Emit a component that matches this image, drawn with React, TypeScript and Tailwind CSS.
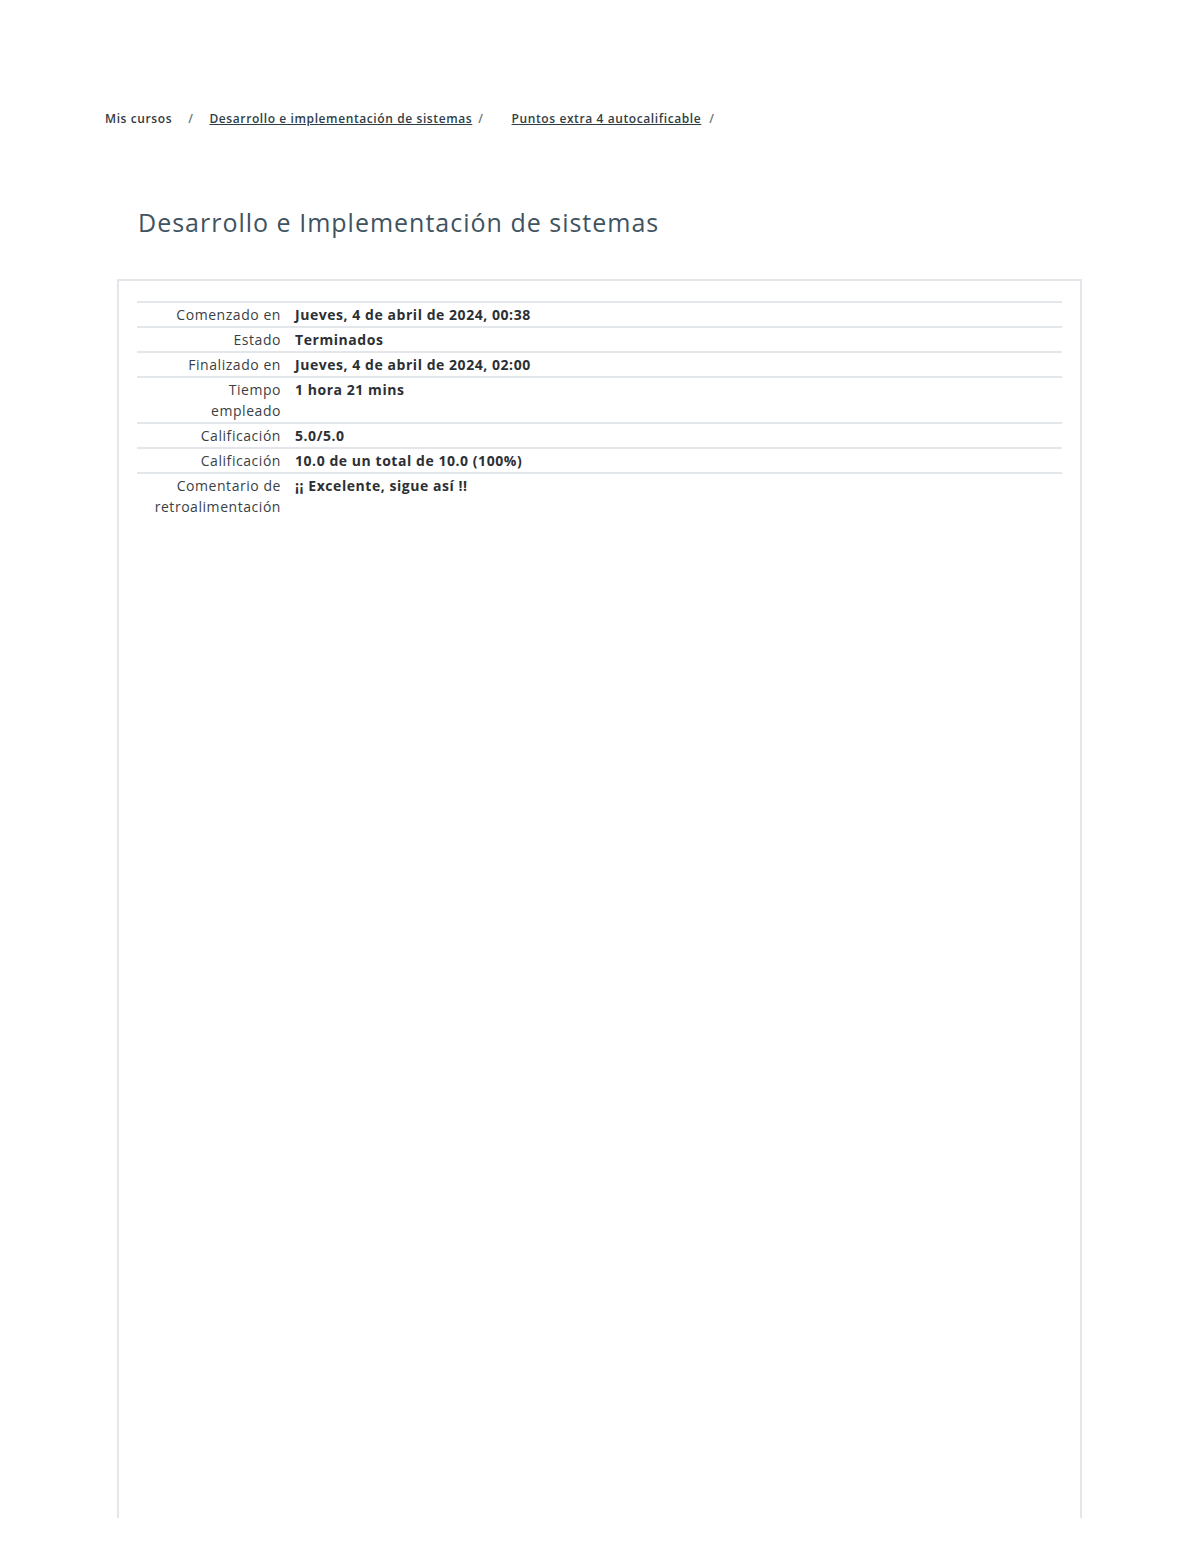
const ROWS: { label: string[]; value: string }[] = [
  { label: ["Comenzado en"], value: "Jueves, 4 de abril de 2024, 00:38" },
  { label: ["Estado"], value: "Terminados" },
  { label: ["Finalizado en"], value: "Jueves, 4 de abril de 2024, 02:00" },
  { label: ["Tiempo", "empleado"], value: "1 hora 21 mins" },
  { label: ["Calificación"], value: "5.0/5.0" },
  { label: ["Calificación"], value: "10.0 de un total de 10.0 (100%)" },
  { label: ["Comentario de", "retroalimentación"], value: "¡¡ Excelente, sigue así !!" },
];

export default function App() {
  return (
    <div className="w-[1200px] h-[1553px] bg-white text-[#333] font-['Open_Sans',sans-serif]">
      {/* breadcrumb */}
      <nav className="pt-[110px] pl-[105px] flex items-center text-[12px] tracking-[0.6px] font-semibold text-[#343a40] leading-[18px]">
        <span>Mis cursos</span>
        <span className="mx-[16px] text-[#6a737b]">/</span>
        <a className="underline text-[#2f3e46]">Desarrollo e implementación de sistemas</a>
        <span className="ml-[6px] mr-[28px] text-[#6a737b]">/</span>
        <a className="underline text-[#2f3e46]">Puntos extra 4 autocalificable</a>
        <span className="ml-[8px] text-[#6a737b]">/</span>
      </nav>

      <h1 className="mt-[79px] ml-[138px] text-[25px] leading-[30px] font-medium text-[#3f5360] tracking-[1px]">
        Desarrollo e Implementación de sistemas
      </h1>

      <div className="mt-[42px] ml-[117px] w-[965px] h-[1239px] border-2 border-b-0 border-[#e3e6ea] pt-[20px] px-[18px]">
        <table className="w-full border-collapse text-[14px] leading-[21px] tracking-[0.55px]">
          <tbody>
            {ROWS.map((r, i) => (
              <tr key={i} className="border-t-2 border-[#e3e6ea] align-top">
                <th className="w-[151px] pr-[7px] py-[1px] text-right font-normal text-[#3a3f44]">
                  {r.label.map((l) => (
                    <div key={l}>{l}</div>
                  ))}
                </th>
                <td className="pl-[7px] py-[1px] font-bold text-[#2c3034]">{r.value}</td>
              </tr>
            ))}
          </tbody>
        </table>
      </div>
    </div>
  );
}
